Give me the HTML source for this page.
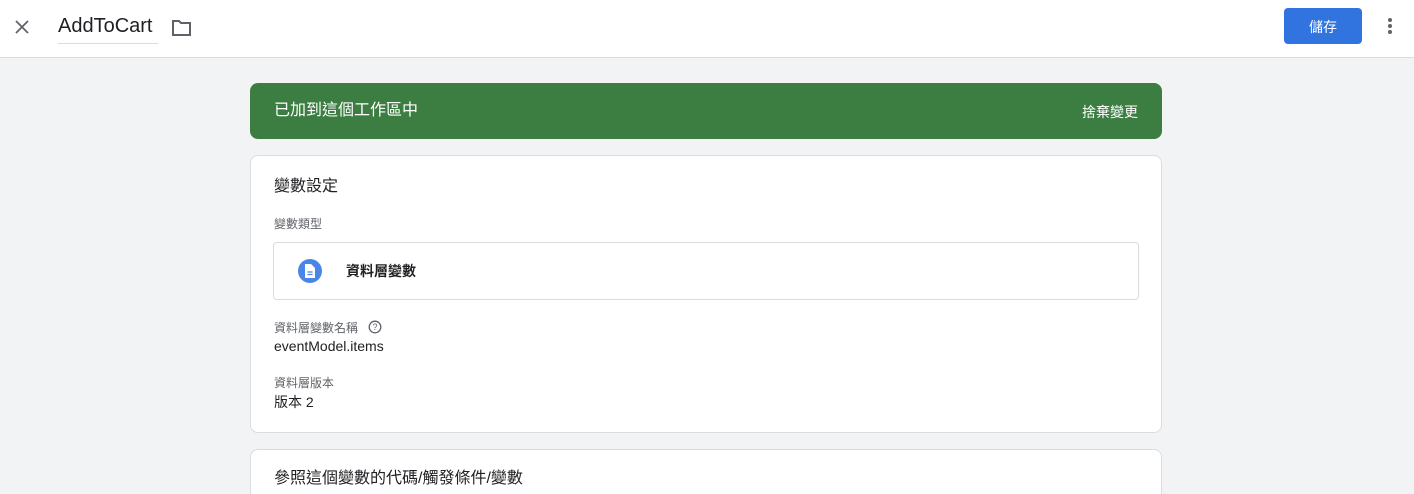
<!DOCTYPE html><html><head><meta charset="utf-8"><style>
*{box-sizing:border-box;margin:0;padding:0}
html,body{width:1414px;height:494px;overflow:hidden}
body{background:#f1f3f4;font-family:"Liberation Sans","Noto Sans CJK TC",sans-serif;color:#202124;position:relative}
.hdr{position:absolute;left:0;top:0;width:1414px;height:58px;background:#fff;border-bottom:1px solid #dadce0}
.abs{position:absolute}
.card{position:absolute;left:250px;width:912px;background:#fff;border:1px solid #dadce0;border-radius:8px}
</style></head><body>
<div class="hdr">
<svg class="abs" style="left:14px;top:19px" width="16" height="16" viewBox="0 0 16 16"><path d="M2 2L14 14M14 2L2 14" stroke="#5f6368" stroke-width="1.8"/></svg>
<div class="abs" style="left:58px;top:15px;font-size:20px;color:#202124">AddToCart</div>
<div class="abs" style="left:58px;top:43px;width:100px;height:1px;background:#dadce0"></div>
<svg class="abs" style="left:171px;top:18px" width="22" height="20" viewBox="0 0 22 20"><path d="M2 3h6l2 2h9v12H2z" fill="none" stroke="#5f6368" stroke-width="2"/></svg>
<div class="abs" style="left:1284px;top:8px;width:78px;height:36px;background:#3174e0;border-radius:4px;color:#fff;font-size:14px;text-align:center;line-height:38px">儲存</div>
<div class="abs" style="left:1388px;top:18px;width:4px;height:4px;border-radius:2px;background:#5f6368;box-shadow:0 6px 0 #5f6368,0 12px 0 #5f6368"></div>
</div>
<div class="abs" style="left:250px;top:83px;width:912px;height:56px;background:#3c7e42;border-radius:8px;color:#fff">
<div class="abs" style="left:24px;top:13px;font-size:16px">已加到這個工作區中</div>
<div class="abs" style="right:24px;top:19px;font-size:14px">捨棄變更</div>
</div>
<div class="card" style="top:155px;height:278px">
<div class="abs" style="left:23px;top:16px;font-size:16px">變數設定</div>
<div class="abs" style="left:23px;top:59px;font-size:12px;color:#5f6368">變數類型</div>
<div class="abs" style="left:22px;top:86px;width:866px;height:58px;border:1px solid #dadce0;border-radius:4px">
<div class="abs" style="left:24px;top:16px;width:24px;height:24px;border-radius:12px;background:#4a86e8"></div>
<svg class="abs" style="left:30px;top:21px" width="12" height="14" viewBox="0 0 12 14"><path d="M1 0h6l4 4v10H1z" fill="#fff"/><path d="M3.5 8h5M3.5 10.5h5" stroke="#4a86e8" stroke-width="1.2"/></svg>
<div class="abs" style="left:72px;top:18px;font-size:14px;font-weight:bold">資料層變數</div>
</div>
<div class="abs" style="left:23px;top:163px;font-size:12px;color:#5f6368">資料層變數名稱</div>
<svg class="abs" style="left:117px;top:164px" width="14" height="14" viewBox="0 0 14 14"><circle cx="7" cy="7" r="5.8" fill="none" stroke="#5f6368" stroke-width="1.3"/><text x="7" y="10.2" font-size="9" text-anchor="middle" fill="#5f6368" font-family="Liberation Sans">?</text></svg>
<div class="abs" style="left:23px;top:182px;font-size:14px">eventModel.items</div>
<div class="abs" style="left:23px;top:218px;font-size:12px;color:#5f6368">資料層版本</div>
<div class="abs" style="left:23px;top:236px;font-size:14px">版本 2</div>
</div>
<div class="card" style="top:449px;height:45px;border-bottom:none;border-radius:8px 8px 0 0">
<div class="abs" style="left:23px;top:14px;font-size:16px">參照這個變數的代碼/觸發條件/變數</div>
</div>
</body></html>
